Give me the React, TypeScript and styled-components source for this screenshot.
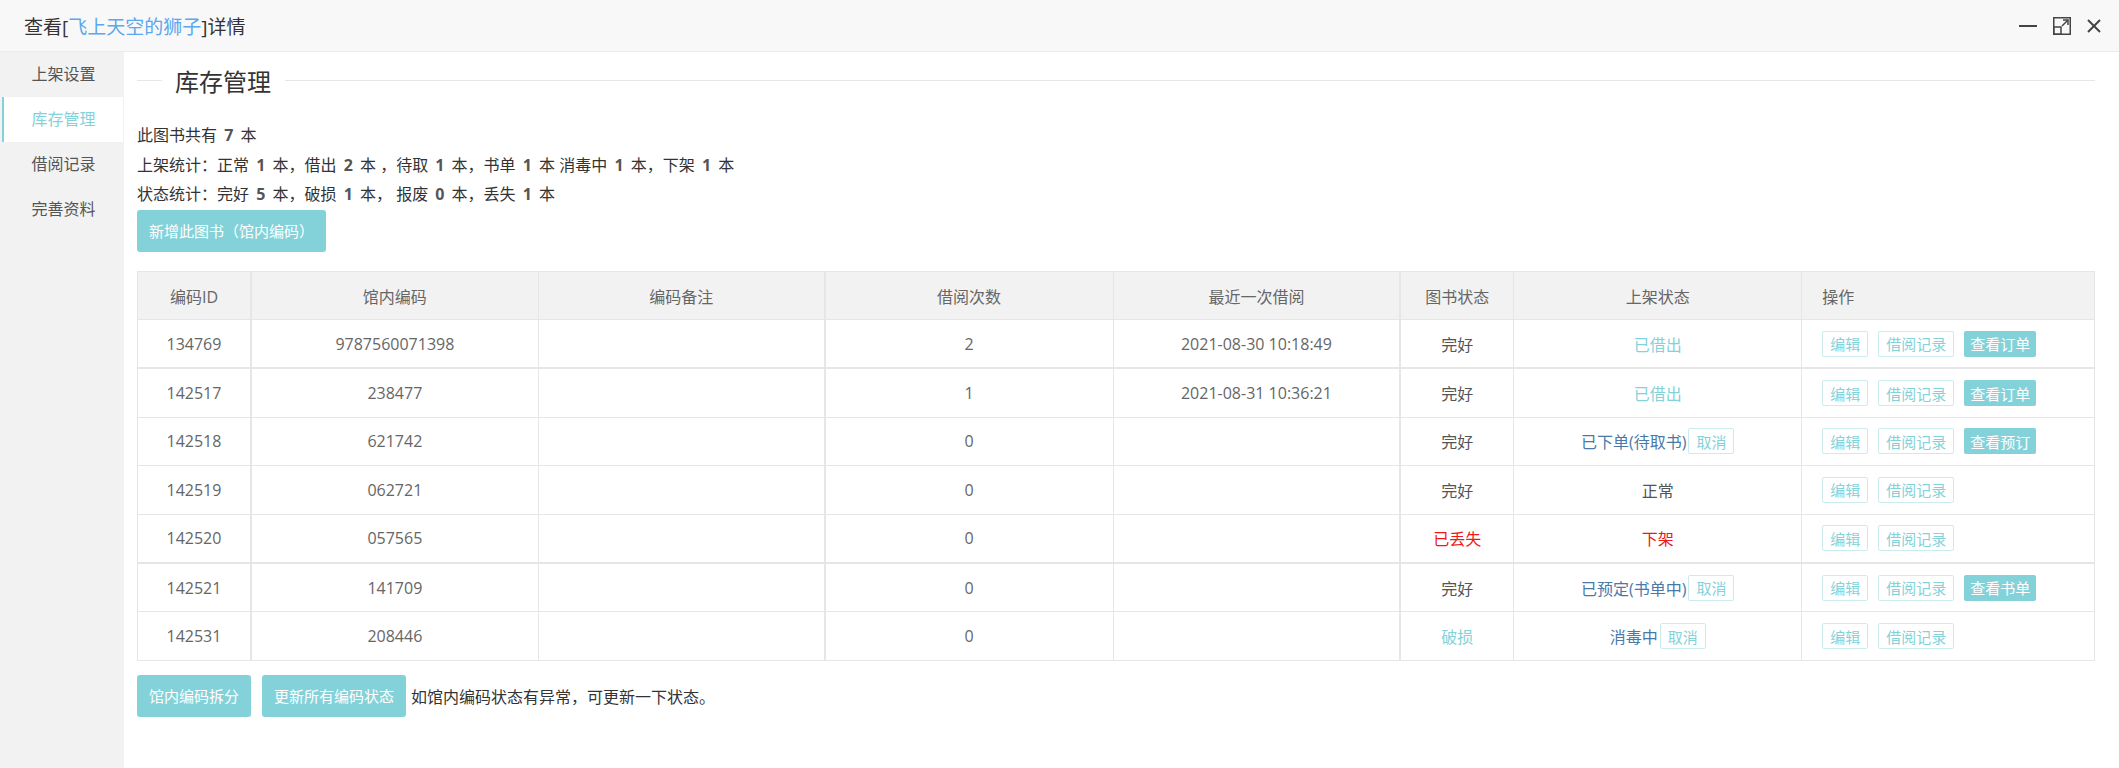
import React from 'react';
import styled, { createGlobalStyle } from 'styled-components';

const GlobalStyle = createGlobalStyle`
  html, body {
    margin: 0;
    padding: 0;
    background: #fff;
  }
  body {
    font-family: "Open Sans", "Noto Sans CJK SC", sans-serif;
    color: #333;
  }
  * { box-sizing: border-box; }
`;

const TEAL = '#84d2d9';

const Page = styled.div`
  display: flex;
  flex-direction: column;
  min-height: 100vh;
`;

const TitleBar = styled.header`
  height: 52px;
  background: #f8f8f8;
  border-bottom: 1px solid #ececec;
  display: flex;
  align-items: center;
  justify-content: space-between;
  padding: 0 18px 0 24px;
  > h1 {
    margin: 0;
    font-size: 19px;
    font-weight: normal;
    color: #333;
    > span { color: #5aa8ef; }
  }
`;

const WinTools = styled.div`
  display: flex;
  align-items: center;
  gap: 16px;
  color: #444;
  > svg { display: block; }
`;

const Body = styled.div`
  flex: 1;
  display: flex;
`;

const Sidebar = styled.nav`
  width: 124px;
  flex-shrink: 0;
  background: #f2f2f2;
`;

const NavItem = styled.div<{ $active?: boolean }>`
  height: 45px;
  line-height: 45px;
  text-align: center;
  font-size: 16px;
  color: ${p => (p.$active ? TEAL : '#555')};
  background: ${p => (p.$active ? '#fff' : 'transparent')};
  border-left: 2px solid ${p => (p.$active ? TEAL : 'transparent')};
  margin: 0 1px 0 2px;
`;

const Main = styled.main`
  flex: 1;
  padding: 0 24px 0 13px;
  background: #fff;
`;

const Legend = styled.div`
  display: flex;
  align-items: center;
  height: 36px;
  margin-top: 10px;
  > i {
    display: block;
    height: 1px;
    background: #e6e6e6;
  }
  > i:first-child { width: 25px; }
  > i:last-child { flex: 1; }
  > span {
    font-size: 24px;
    color: #333;
    padding: 0 14px 0 13px;
  }
`;

const Stats = styled.div`
  margin-top: 23px;
  font-size: 16px;
  line-height: 29.5px;
  color: #333;
  > p { margin: 0; white-space: pre; }
  b { color: #555; font-weight: bold; margin: 0 3px; }
`;

const FillButton = styled.button<{ $small?: boolean }>`
  height: ${p => (p.$small ? 26 : 42)}px;
  padding: 0 ${p => (p.$small ? 6 : 12)}px;
  border: none;
  border-radius: ${p => (p.$small ? 2 : 3)}px;
  background: ${TEAL};
  color: #fff;
  font-family: inherit;
  font-size: 15px;
  cursor: pointer;
  vertical-align: middle;
`;

const LineButton = styled.button`
  height: 26px;
  padding: 0 7px;
  border: 1px solid #cbecef;
  border-radius: 2px;
  background: #fff;
  color: ${TEAL};
  font-family: inherit;
  font-size: 15px;
  cursor: pointer;
  vertical-align: middle;
`;

const Table = styled.div`
  margin-top: 19.5px;
  border-top: 1px solid #e6e6e6;
  border-left: 1px solid #e6e6e6;
  font-size: 16px;
  color: #666;
`;

const Row = styled.div<{ $head?: boolean; $split?: boolean }>`
  display: grid;
  grid-template-columns: 114fr 287fr 287fr 288fr 288fr 113fr 288fr 293fr;
  height: ${p => (p.$head ? 48 : p.$split ? 49.4 : 48.4)}px;
  background: ${p => (p.$head ? '#f2f2f2' : '#fff')};
  border-top: ${p => (p.$split ? '1px solid #e6e6e6' : 'none')};
  > div {
    display: flex;
    align-items: center;
    justify-content: center;
    border-right: 1px solid #e6e6e6;
    border-bottom: 1px solid #e6e6e6;
    white-space: nowrap;
  }
  > div:nth-child(1), > div:nth-child(3), > div:nth-child(5) {
    border-right-width: 2px;
  }
  > div:last-child {
    justify-content: flex-start;
    padding-left: 20px;
    gap: 10px;
  }
`;

type Tone = 'teal' | 'blue' | 'red' | 'gray' | 'dark';

const ToneText = styled.span<{ $tone: Tone }>`
  color: ${p =>
    ({ teal: TEAL, blue: '#4a79a8', red: '#f01818', gray: '#666', dark: '#555' }[p.$tone])};
  & + button { margin-left: 2px; }
`;

const Footer = styled.div`
  margin-top: 14px;
  display: flex;
  align-items: center;
  gap: 11px;
  font-size: 16px;
  color: #333;
  > span { margin-left: -6px; }
`;

type Item = {
  id: string;
  code: string;
  count: string;
  last: string;
  state: string;
  stateTone: Tone;
  shelf: string;
  shelfTone: Tone;
  cancel?: boolean;
  extra?: string;
  split?: boolean;
};

const rows: Item[] = [
  { id: '134769', code: '9787560071398', count: '2', last: '2021-08-30 10:18:49', state: '完好', stateTone: 'dark', shelf: '已借出', shelfTone: 'teal', extra: '查看订单' },
  { id: '142517', code: '238477', count: '1', last: '2021-08-31 10:36:21', state: '完好', stateTone: 'dark', shelf: '已借出', shelfTone: 'teal', extra: '查看订单', split: true },
  { id: '142518', code: '621742', count: '0', last: '', state: '完好', stateTone: 'dark', shelf: '已下单(待取书)', shelfTone: 'blue', cancel: true, extra: '查看预订' },
  { id: '142519', code: '062721', count: '0', last: '', state: '完好', stateTone: 'dark', shelf: '正常', shelfTone: 'dark' },
  { id: '142520', code: '057565', count: '0', last: '', state: '已丢失', stateTone: 'red', shelf: '下架', shelfTone: 'red' },
  { id: '142521', code: '141709', count: '0', last: '', state: '完好', stateTone: 'dark', shelf: '已预定(书单中)', shelfTone: 'blue', cancel: true, extra: '查看书单', split: true },
  { id: '142531', code: '208446', count: '0', last: '', state: '破损', stateTone: 'teal', shelf: '消毒中', shelfTone: 'blue', cancel: true },
];

const heads = ['编码ID', '馆内编码', '编码备注', '借阅次数', '最近一次借阅', '图书状态', '上架状态', '操作'];

const App: React.FC = () => {
  return (
    <Page>
      <GlobalStyle />
      <TitleBar>
        <h1>
          查看[<span>飞上天空的狮子</span>]详情
        </h1>
        <WinTools>
          <svg width="18" height="18" viewBox="0 0 18 18">
            <line x1="0" y1="9" x2="18" y2="9" stroke="currentColor" strokeWidth="2" />
          </svg>
          <svg width="18" height="18" viewBox="0 0 18 18" fill="none" stroke="currentColor" strokeWidth="1.5">
            <rect x="0.75" y="0.75" width="16.5" height="16.5" />
            <rect x="0.75" y="10" width="7.25" height="7.25" />
            <line x1="9" y1="9" x2="15" y2="3" />
            <polyline points="10,3 15,3 15,8" />
          </svg>
          <svg width="14" height="14" viewBox="0 0 14 14" stroke="currentColor" strokeWidth="2">
            <line x1="1" y1="1" x2="13" y2="13" />
            <line x1="13" y1="1" x2="1" y2="13" />
          </svg>
        </WinTools>
      </TitleBar>
      <Body>
        <Sidebar>
          <NavItem>上架设置</NavItem>
          <NavItem $active>库存管理</NavItem>
          <NavItem>借阅记录</NavItem>
          <NavItem>完善资料</NavItem>
        </Sidebar>
        <Main>
          <Legend>
            <i />
            <span>库存管理</span>
            <i />
          </Legend>
          <Stats>
            <p>此图书共有 <b>7</b> 本</p>
            <p>
              上架统计：正常 <b>1</b> 本，借出 <b>2</b> 本 ，待取 <b>1</b> 本，书单 <b>1</b> 本 消毒中 <b>1</b> 本，下架 <b>1</b> 本
            </p>
            <p>
              状态统计：完好 <b>5</b> 本，破损 <b>1</b> 本， 报废 <b>0</b> 本，丢失 <b>1</b> 本
            </p>
          </Stats>
          <FillButton>新增此图书（馆内编码）</FillButton>
          <Table>
            <Row $head>
              {heads.map(h => (
                <div key={h}>{h}</div>
              ))}
            </Row>
            {rows.map(r => (
              <Row key={r.id} $split={r.split}>
                <div>{r.id}</div>
                <div>{r.code}</div>
                <div></div>
                <div>{r.count}</div>
                <div>{r.last}</div>
                <div>
                  <ToneText $tone={r.stateTone}>{r.state}</ToneText>
                </div>
                <div>
                  <ToneText $tone={r.shelfTone}>{r.shelf}</ToneText>
                  {r.cancel && <LineButton>取消</LineButton>}
                </div>
                <div>
                  <LineButton>编辑</LineButton>
                  <LineButton>借阅记录</LineButton>
                  {r.extra && <FillButton $small>{r.extra}</FillButton>}
                </div>
              </Row>
            ))}
          </Table>
          <Footer>
            <FillButton>馆内编码拆分</FillButton>
            <FillButton>更新所有编码状态</FillButton>
            <span>如馆内编码状态有异常，可更新一下状态。</span>
          </Footer>
        </Main>
      </Body>
    </Page>
  );
};

export default App;
